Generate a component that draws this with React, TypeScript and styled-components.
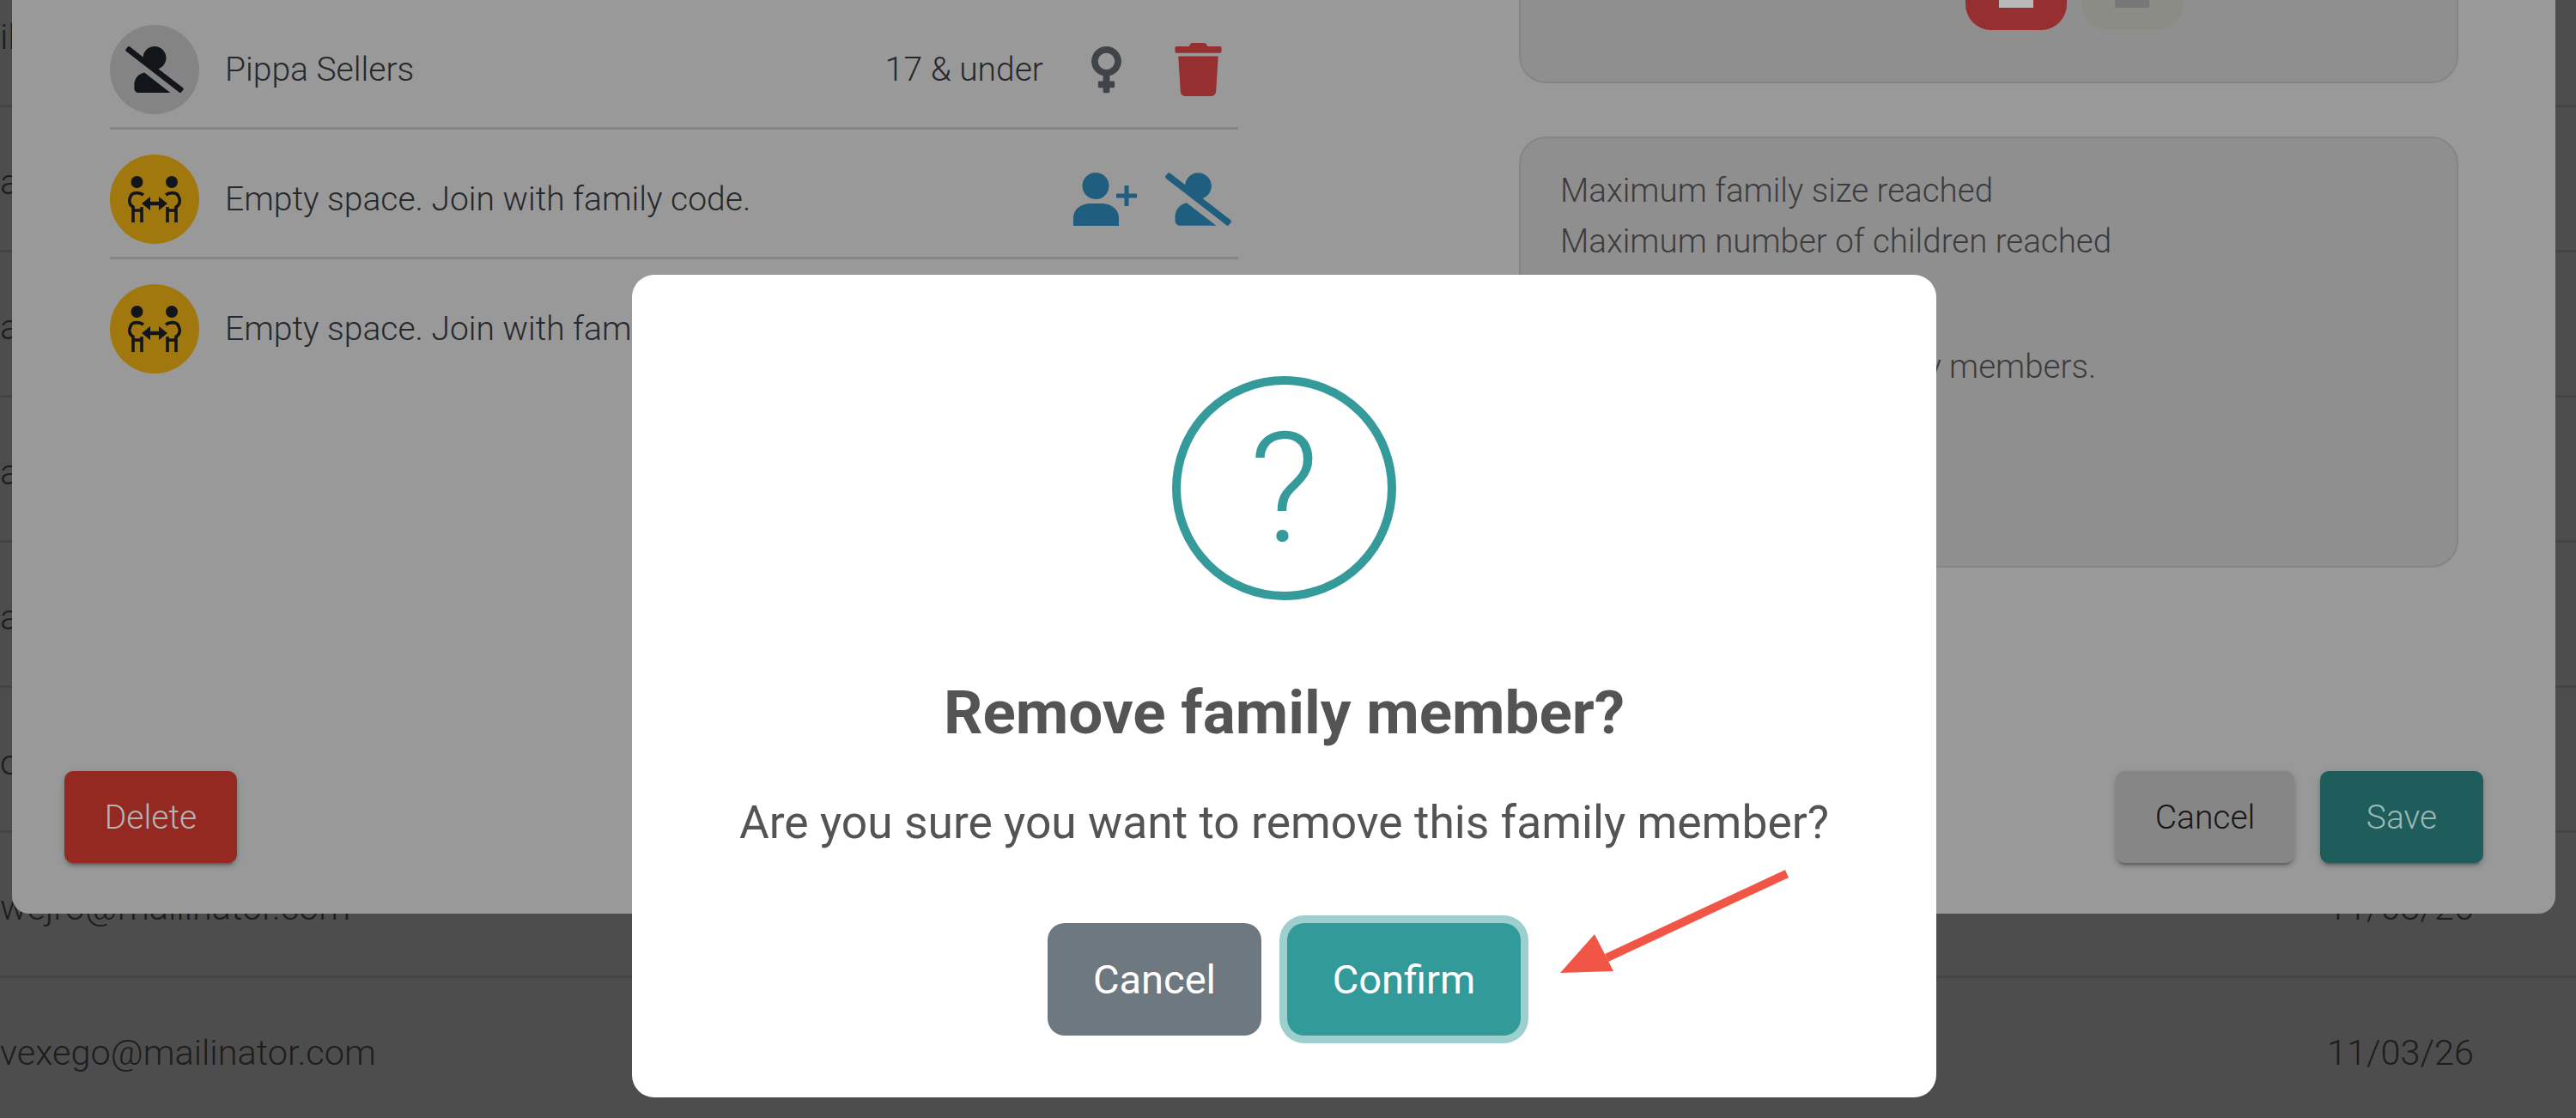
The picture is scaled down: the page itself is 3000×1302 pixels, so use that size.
import React from 'react'
import styled, { createGlobalStyle } from 'styled-components'
import { FaTrash, FaUserSlash, FaVenus } from 'react-icons/fa'

const GlobalStyle = createGlobalStyle`
  html, body {
    margin: 0;
    width: 3000px;
    height: 1302px;
    overflow: hidden;
    background: #4d4d4d;
    font-family: Roboto, "Liberation Sans", sans-serif;
  }
`

const Page = styled.div`
  position: relative;
  width: 3000px;
  height: 1302px;
  overflow: hidden;
`

const Table = styled.div`
  margin-top: -44px;
`

const TableRow = styled.div`
  display: flex;
  align-items: center;
  justify-content: space-between;
  box-sizing: border-box;
  height: 169px;
  padding: 6px 119px 0 0;
  border-bottom: 3px solid #444444;
  color: #1d1d1d;
  font-size: 41.5px;
  font-weight: 300;
`

const Panel = styled.div`
  position: absolute;
  top: -100px;
  left: 14px;
  display: flex;
  flex-direction: column;
  box-sizing: border-box;
  width: 2962px;
  height: 1164px;
  border-radius: 0 0 20px 20px;
  background: #999999;
`

const PanelBody = styled.div`
  flex: 1;
  display: grid;
  grid-template-columns: 1314px 1094px;
  column-gap: 327px;
  padding: 0 113px 0 114px;
`

const Members = styled.div`
  padding-top: 100px;
`

const MemberRow = styled.div`
  display: flex;
  align-items: center;
  padding: 29px 8px 15px 0;
  border-bottom: 3px solid #858585;
  color: #26282b;
  font-size: 39px;
  font-weight: 300;

  &:last-child {
    border-bottom: 0;
  }
`

const Avatar = styled.div<{ $color: string }>`
  display: flex;
  align-items: center;
  justify-content: center;
  flex: none;
  width: 104px;
  height: 104px;
  margin-right: 30px;
  border-radius: 50%;
  background: ${({ $color }) => $color};
  color: #12151a;

  svg {
    width: 68px;
    height: 54px;
  }
`

const MemberName = styled.span`
  flex: 1;
  white-space: nowrap;
`

const AgeLabel = styled.span`
  margin-right: 5px;
`

const IconSlot = styled.div<{ $color: string }>`
  display: flex;
  justify-content: center;
  width: 77px;
  margin-left: 30px;
  color: ${({ $color }) => $color};

  svg {
    width: 77px;
    height: 62px;
  }
`

const SideColumn = styled.div`
  display: flex;
  flex-direction: column;
  gap: 62px;
  padding-top: 40px;
`

const Card = styled.div`
  box-sizing: border-box;
  border: 2px solid #868586;
  border-radius: 32px;
  background: #908f90;
`

const ChoiceCard = styled(Card)`
  display: flex;
  justify-content: flex-end;
  height: 157px;
  padding-right: 319px;
  gap: 17px;
`

const Choice = styled.div<{ $color: string; $mark: string }>`
  display: flex;
  align-items: flex-end;
  justify-content: center;
  width: 118px;
  height: 93px;
  padding-bottom: 26px;
  box-sizing: border-box;
  border-radius: 0 0 30px 30px;
  background: ${({ $color }) => $color};

  &::after {
    content: '';
    width: 40px;
    height: 40px;
    background: ${({ $mark }) => $mark};
  }
`

const NoticeCard = styled(Card)`
  height: 502px;
  padding: 31px 46px;
  color: #3c3c3c;
  font-size: 38.5px;
  font-weight: 300;
  line-height: 59px;
`

const NoticeLine = styled.div<{ $gap?: number }>`
  margin-top: ${({ $gap }) => $gap || 0}px;
  white-space: nowrap;
`

const PanelFooter = styled.div`
  display: flex;
  align-items: center;
  gap: 30px;
  padding: 0 84px 59px 61px;
`

const FooterButton = styled.div<{ $bg: string; $fg: string; $width: number }>`
  display: flex;
  align-items: center;
  justify-content: center;
  width: ${({ $width }) => $width}px;
  height: 107px;
  border-radius: 10px;
  background: ${({ $bg }) => $bg};
  box-shadow: 0 6px 2px -4px rgba(0, 0, 0, 0.2), 0 4px 4px rgba(0, 0, 0, 0.14), 0 2px 10px rgba(0, 0, 0, 0.12);
  color: ${({ $fg }) => $fg};
  font-size: 39px;
  font-weight: 300;
`

const Spacer = styled.div`
  flex: 1;
`

const Dialog = styled.div`
  position: absolute;
  top: 320px;
  left: 736px;
  display: flex;
  flex-direction: column;
  align-items: center;
  box-sizing: border-box;
  width: 1519px;
  height: 958px;
  padding-top: 118px;
  border-radius: 26px;
  background: #ffffff;
  color: #545454;
`

const QuestionIcon = styled.div`
  display: flex;
  align-items: center;
  justify-content: center;
  box-sizing: border-box;
  width: 261px;
  height: 261px;
  border: 10px solid #359a9a;
  border-radius: 50%;
  color: #359a9a;
  font-size: 178px;
  font-weight: 350;
  line-height: 1;
`

const DialogTitle = styled.h2`
  margin: 91px 0 0;
  font-size: 71px;
  font-weight: 700;
  line-height: 80px;
`

const DialogText = styled.p`
  margin: 58px 0 0;
  font-size: 53.4px;
  font-weight: 400;
  line-height: 60px;
`

const DialogActions = styled.div`
  display: flex;
  gap: 30px;
  margin-top: 87px;
`

const DialogButton = styled.div<{ $bg: string; $width: number; $ring?: boolean }>`
  display: flex;
  align-items: center;
  justify-content: center;
  width: ${({ $width }) => $width}px;
  height: 131px;
  border-radius: 20px;
  background: ${({ $bg }) => $bg};
  box-shadow: ${({ $ring }) => ($ring ? '0 0 0 9px #9ccfce' : 'none')};
  color: #ffffff;
  font-size: 47px;
  font-weight: 450;
`

const Arrow = styled.svg`
  position: absolute;
  top: 1000px;
  left: 1800px;
`

const emails = [
  'ilaxe@mailinator.com',
  'aruno@mailinator.com',
  'adiko@mailinator.com',
  'amelo@mailinator.com',
  'avimu@mailinator.com',
  'oxade@mailinator.com',
  'wejro@mailinator.com',
  'vexego@mailinator.com',
]

// the package's people-arrows is too heavy, the reference has outlined bodies
const PeopleArrows = () => (
  <svg viewBox="0 0 62 54" fill="none" stroke="currentColor" strokeWidth="3.6">
    <circle cx="10.5" cy="7" r="7" fill="currentColor" stroke="none" />
    <circle cx="51" cy="7" r="7" fill="currentColor" stroke="none" />
    <path d="M18 22 C14 19 5 18 3 24 C1 28 1 33 6 36 L6 54 M16 36 L16 54 M6 40 L16 40" />
    <path d="M44 22 C48 19 57 18 59 24 C61 28 61 33 56 36 L56 54 M46 36 L46 54 M46 40 L56 40" />
    <path d="M24 32 L38 32" strokeWidth="4.4" />
    <path d="M16 32 L26 24 L26 40 Z M46 32 L36 24 L36 40 Z" fill="currentColor" stroke="none" />
  </svg>
)

// thinner plus than the package's user-plus
const UserPlus = () => (
  <svg viewBox="0 0 77 62" fill="currentColor">
    <circle cx="26" cy="15.5" r="15.5" />
    <path d="M0 62 V53 C0 42 10 36 20 36 H33 C43 36 53 42 53 53 V62 Z" />
    <path d="M59.5 15 H64.5 V24.5 H74 V29.5 H64.5 V39 H59.5 V29.5 H50 V24.5 H59.5 Z" />
  </svg>
)

const EmptyMember = ({ actions }: { actions: boolean }) => (
  <MemberRow>
    <Avatar $color="#a0780d">
      <PeopleArrows />
    </Avatar>
    <MemberName>Empty space. Join with family code.</MemberName>
    {actions && (
      <>
        <IconSlot $color="#205e80">
          <UserPlus />
        </IconSlot>
        <IconSlot $color="#205e80">
          <FaUserSlash />
        </IconSlot>
      </>
    )}
  </MemberRow>
)

const App = () => (
  <Page>
    <GlobalStyle />
    <Table>
      {emails.map((email) => (
        <TableRow key={email}>
          <span>{email}</span>
          <span>11/03/26</span>
        </TableRow>
      ))}
    </Table>

    <Panel>
      <PanelBody>
        <Members>
          <MemberRow>
            <Avatar $color="#858485">
              <FaUserSlash />
            </Avatar>
            <MemberName>Pippa Sellers</MemberName>
            <AgeLabel>17 &amp; under</AgeLabel>
            <IconSlot $color="#40444a">
              <FaVenus />
            </IconSlot>
            <IconSlot $color="#962f30">
              <FaTrash />
            </IconSlot>
          </MemberRow>
          <EmptyMember actions />
          <EmptyMember actions={false} />
        </Members>
        <SideColumn>
          <ChoiceCard>
            <Choice $color="#962f30" $mark="#b9b9b9" />
            <Choice $color="#8b8c85" $mark="#777777" />
          </ChoiceCard>
          <NoticeCard>
            <NoticeLine>Maximum family size reached</NoticeLine>
            <NoticeLine>Maximum number of children reached</NoticeLine>
            <NoticeLine $gap={87}>Only adults can add family members.</NoticeLine>
          </NoticeCard>
        </SideColumn>
      </PanelBody>
      <PanelFooter>
        <FooterButton $bg="#932920" $fg="#b5b5b5" $width={201}>Delete</FooterButton>
        <Spacer />
        <FooterButton $bg="#858685" $fg="#161616" $width={208}>Cancel</FooterButton>
        <FooterButton $bg="#1f5c5c" $fg="#9cb8b6" $width={190}>Save</FooterButton>
      </PanelFooter>
    </Panel>

    <Dialog>
      <QuestionIcon>?</QuestionIcon>
      <DialogTitle>Remove family member?</DialogTitle>
      <DialogText>Are you sure you want to remove this family member?</DialogText>
      <DialogActions>
        <DialogButton $bg="#6e7881" $width={249}>Cancel</DialogButton>
        <DialogButton $bg="#339a9a" $width={272} $ring>Confirm</DialogButton>
      </DialogActions>
    </Dialog>

    <Arrow width="300" height="150" viewBox="0 0 300 150">
      <path d="M279 13 L283 22 L73 120 L69 111 Z" fill="#f05545" />
      <path d="M17 133 L57 88 L79 131 Z" fill="#f05545" />
    </Arrow>
  </Page>
)

export default App
